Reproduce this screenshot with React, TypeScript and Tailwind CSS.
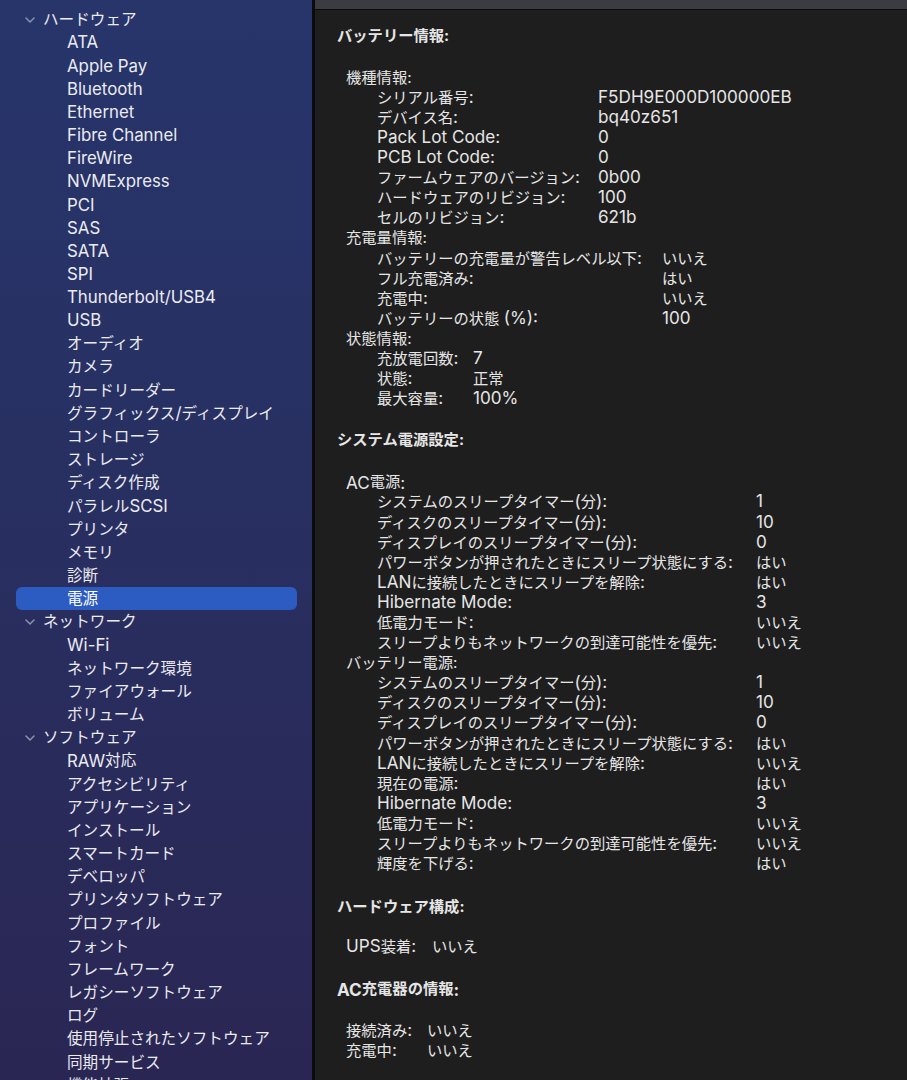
import React from 'react'

type Row = [string, string]

const SIDEBAR: { title: string; items: string[] }[] = [
  {
    title: 'ハードウェア',
    items: [
      'ATA', 'Apple Pay', 'Bluetooth', 'Ethernet', 'Fibre Channel', 'FireWire', 'NVMExpress', 'PCI', 'SAS', 'SATA',
      'SPI', 'Thunderbolt/USB4', 'USB', 'オーディオ', 'カメラ', 'カードリーダー', 'グラフィックス/ディスプレイ',
      'コントローラ', 'ストレージ', 'ディスク作成', 'パラレルSCSI', 'プリンタ', 'メモリ', '診断', '電源',
    ],
  },
  { title: 'ネットワーク', items: ['Wi-Fi', 'ネットワーク環境', 'ファイアウォール', 'ボリューム'] },
  {
    title: 'ソフトウェア',
    items: [
      'RAW対応', 'アクセシビリティ', 'アプリケーション', 'インストール', 'スマートカード', 'デベロッパ',
      'プリンタソフトウェア', 'プロファイル', 'フォント', 'フレームワーク', 'レガシーソフトウェア', 'ログ',
      '使用停止されたソフトウェア', '同期サービス', '機能拡張',
    ],
  },
]

const MODEL: Row[] = [
  ['シリアル番号:', 'F5DH9E000D100000EB'],
  ['デバイス名:', 'bq40z651'],
  ['Pack Lot Code:', '0'],
  ['PCB Lot Code:', '0'],
  ['ファームウェアのバージョン:', '0b00'],
  ['ハードウェアのリビジョン:', '100'],
  ['セルのリビジョン:', '621b'],
]

const CHARGE: Row[] = [
  ['バッテリーの充電量が警告レベル以下:', 'いいえ'],
  ['フル充電済み:', 'はい'],
  ['充電中:', 'いいえ'],
  ['バッテリーの状態 (%):', '100'],
]

const HEALTH: Row[] = [
  ['充放電回数:', '7'],
  ['状態:', '正常'],
  ['最大容量:', '100%'],
]

const AC_POWER: Row[] = [
  ['システムのスリープタイマー(分):', '1'],
  ['ディスクのスリープタイマー(分):', '10'],
  ['ディスプレイのスリープタイマー(分):', '0'],
  ['パワーボタンが押されたときにスリープ状態にする:', 'はい'],
  ['LANに接続したときにスリープを解除:', 'はい'],
  ['Hibernate Mode:', '3'],
  ['低電力モード:', 'いいえ'],
  ['スリープよりもネットワークの到達可能性を優先:', 'いいえ'],
]

const BATTERY_POWER: Row[] = [
  ['システムのスリープタイマー(分):', '1'],
  ['ディスクのスリープタイマー(分):', '10'],
  ['ディスプレイのスリープタイマー(分):', '0'],
  ['パワーボタンが押されたときにスリープ状態にする:', 'はい'],
  ['LANに接続したときにスリープを解除:', 'いいえ'],
  ['現在の電源:', 'はい'],
  ['Hibernate Mode:', '3'],
  ['低電力モード:', 'いいえ'],
  ['スリープよりもネットワークの到達可能性を優先:', 'いいえ'],
  ['輝度を下げる:', 'はい'],
]

// Latin runs come out narrower than the reference's system font, so they get a slightly bigger size
function Mixed({ text, wide }: { text: string; wide?: boolean }) {
  const parts = text.split(/([\u0021-\u007E][\u0020-\u007E]*)/).filter(Boolean)
  return (
    <>
      {parts.map((p, i) =>
        /[\u0021-\u007E]/.test(p[0]) ? (
          <span key={i} className={wide ? 'text-[1.12em] leading-none' : 'text-[1.08em] leading-none'}>
            {p}
          </span>
        ) : (
          <span key={i}>{p}</span>
        ),
      )}
    </>
  )
}

function Chevron() {
  return (
    <svg width="10" height="6" viewBox="0 0 10 6" className="shrink-0">
      <polyline points="1,1 5,5 9,1" fill="none" stroke="#8d93ad" strokeWidth="1.5" strokeLinecap="round" strokeLinejoin="round" />
    </svg>
  )
}

function Sidebar() {
  return (
    <div className="w-[312px] shrink-0 h-full overflow-hidden bg-linear-to-b from-[#27356b] via-[#282f60] to-[#2a2653] pt-[8px] text-[#ebebf2] text-[15.6px]">
      {SIDEBAR.map((group) => (
        <div key={group.title}>
          <div className="h-[23.18px] flex items-center pl-[25px] gap-[8px]">
            <Chevron />
            <span className="leading-none">{group.title}</span>
          </div>
          {group.items.map((item) =>
            item === '電源' ? (
              <div key={item} className="h-[23.18px] flex items-center">
                <div className="ml-[16px] w-[281px] h-[23px] rounded-[6px] bg-[#2c5bc2] flex items-center pl-[51px] text-white">
                  {item}
                </div>
              </div>
            ) : (
              <div key={item} className="h-[23.18px] flex items-center pl-[67px] whitespace-nowrap">
                <Mixed text={item} />
              </div>
            ),
          )}
        </div>
      ))}
    </div>
  )
}

function Rows({ rows, labelW }: { rows: Row[]; labelW: number }) {
  return (
    <div className="pl-[31px]">
      {rows.map(([k, v], i) => (
        <div key={i} className="flex h-[20.1px] items-center whitespace-nowrap">
          <div style={{ width: labelW }} className="shrink-0">
            <Mixed text={k} wide />
          </div>
          <div>
            <Mixed text={v} wide />
          </div>
        </div>
      ))}
    </div>
  )
}

function Line({ children, className = '' }: { children: React.ReactNode; className?: string }) {
  return <div className={`h-[20.1px] flex items-center whitespace-nowrap ${className}`}>{children}</div>
}

export default function App() {
  return (
    <div
      className="w-[907px] h-[1080px] flex overflow-hidden bg-[#1e1e1e]"
      style={{ fontFamily: 'Inter, "Noto Sans CJK JP", sans-serif' }}
    >
      <Sidebar />
      <div className="w-[3px] shrink-0 bg-[#0b0b0d]" />
      <div className="flex-1 flex flex-col">
        <div className="h-[9px] bg-[#3b3c41] shrink-0" />
        <div className="h-[1px] bg-[#0c0c0c] shrink-0" />
        <div className="flex-1 bg-[#1e1e1e] text-[#e6e6e6] text-[15.3px] pl-[22px] pt-[16px]">
          <Line className="font-bold">バッテリー情報:</Line>

          <div className="mt-[22px] pl-[9px]">
            <Line>機種情報:</Line>
            <Rows rows={MODEL} labelW={221} />
            <Line>充電量情報:</Line>
            <Rows rows={CHARGE} labelW={285} />
            <Line>状態情報:</Line>
            <Rows rows={HEALTH} labelW={96} />
          </div>

          <Line className="font-bold mt-[21px]">システム電源設定:</Line>

          <div className="mt-[22px] pl-[9px]">
            <Line>
              <Mixed text="AC電源:" wide />
            </Line>
            <Rows rows={AC_POWER} labelW={379} />
            <Line>バッテリー電源:</Line>
            <Rows rows={BATTERY_POWER} labelW={379} />
          </div>

          <Line className="font-bold mt-[23px]">ハードウェア構成:</Line>

          <div className="mt-[20px] pl-[9px]">
            <Line>
              <span className="w-[86px] shrink-0">
                <Mixed text="UPS装着:" wide />
              </span>
              <span>いいえ</span>
            </Line>
          </div>

          <Line className="font-bold mt-[22px]">
            <Mixed text="AC充電器の情報:" wide />
          </Line>

          <div className="mt-[21px] pl-[9px]">
            <Line>
              <span className="w-[81px] shrink-0">
                <Mixed text="接続済み:" wide />
              </span>
              <span>いいえ</span>
            </Line>
            <Line>
              <span className="w-[81px] shrink-0">
                <Mixed text="充電中:" wide />
              </span>
              <span>いいえ</span>
            </Line>
          </div>
        </div>
      </div>
    </div>
  )
}
